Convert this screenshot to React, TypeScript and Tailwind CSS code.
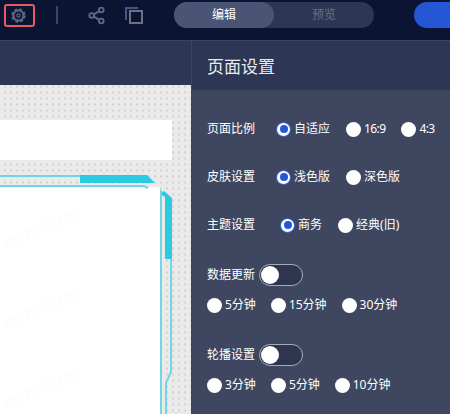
import { Share2 } from "lucide-react"

const font = { fontFamily: '"Noto Sans", "Noto Sans CJK SC", sans-serif' }

function Radio({ label, checked, tight }: { label: string; checked?: boolean; tight?: boolean }) {
  return (
    <div className="flex shrink-0 items-center gap-[3px]">
      <span
        className={
          checked
            ? "flex h-[15px] w-[15px] items-center justify-center rounded-full border border-[#2456d6] bg-white"
            : "h-[15px] w-[15px] rounded-full bg-white"
        }
      >
        {checked && <span className="h-2 w-2 rounded-full bg-[#2456d6]" />}
      </span>
      <span className={tight ? "text-[12px] leading-none tracking-[-0.6px] whitespace-nowrap text-white" : "text-[12px] leading-none whitespace-nowrap text-white"}>
        {label}
      </span>
    </div>
  )
}

function Toggle() {
  return (
    <div className="flex h-[22px] w-[44px] items-center rounded-full border border-[#a8abb5] bg-[#2f3550] pl-[1px]">
      <span className="h-[18px] w-[18px] rounded-full bg-white" />
    </div>
  )
}

function Row({ className, children }: { className: string; children: React.ReactNode }) {
  return <div className={`flex h-6 items-center ${className}`}>{children}</div>
}

function Label({ text }: { text: string }) {
  return <span className="shrink-0 text-[12px] leading-none whitespace-nowrap text-white">{text}</span>
}

export default function App() {
  return (
    <div className="flex h-[414px] w-[450px] flex-col overflow-hidden bg-[#0b1533]" style={font}>
      {/* Top bar */}
      <div className="flex h-10 shrink-0 items-center pb-[10px]">
        <div className="ml-1 flex h-[23px] w-[31px] items-center justify-center rounded-[3px] border-2 border-[#e8585c] pr-[3px]">
          <svg width="15" height="15" viewBox="0 0 15 15" fill="none">
            <circle cx="7.5" cy="7.5" r="5" stroke="#5d6884" strokeWidth="2.2" />
            <circle cx="7.5" cy="7.5" r="6.4" stroke="#5d6884" strokeWidth="1.6" strokeDasharray="3 2.03" />
            <circle cx="7.5" cy="7.5" r="1.6" stroke="#5d6884" strokeWidth="1.2" />
          </svg>
        </div>
        <div className="ml-[21px] h-[18px] w-[2px] bg-[#3d4560]" />
        <Share2 className="ml-[29px] h-[19px] w-[19px] text-[#5d6884]" strokeWidth={2.4} />
        <svg className="ml-[19px]" width="18" height="17" viewBox="0 0 18 17" fill="none">
          <path d="M1 13V1h12" stroke="#46558a" strokeWidth="2" />
          <rect x="5" y="4" width="12" height="12" stroke="#6c7184" strokeWidth="2" />
        </svg>
        <div className="ml-[31px] flex h-[26px] w-[200px] items-center rounded-full bg-[#2d3654] text-[12px]">
          <div className="flex h-full w-[100px] items-center justify-center rounded-full bg-[#4a5475] text-white">编辑</div>
          <div className="flex h-full w-[100px] items-center justify-center text-[#6a7085]">预览</div>
        </div>
        <div className="ml-10 h-[26px] flex-1 rounded-l-full bg-[#2456d6]" />
      </div>

      <div className="flex min-h-0 flex-1">
        {/* Canvas column */}
        <div className="flex w-[192px] shrink-0 flex-col border-r border-[#3d4560]">
          <div className="h-[45px] shrink-0 border-t border-[#3d4560] bg-[#2d3654]" />
          <div className="relative flex min-h-0 flex-1 flex-col bg-[#eaeaea] bg-[radial-gradient(#d2d2d2_1px,transparent_1.2px)] bg-[length:6px_6px] bg-[position:2px_-1.5px]">
            <div className="mt-[35px] h-10 w-[172px] shrink-0 bg-white" />
            <div className="relative mt-[27px] w-[160px] flex-1 overflow-hidden bg-white">
              <span className="absolute left-[2px] top-[32px] -rotate-[24deg] text-[13px] text-[#fbfbfb]">l2100152210</span>
              <span className="absolute left-[2px] top-[112px] -rotate-[24deg] text-[13px] text-[#fbfbfb]">l2100152210</span>
              <span className="absolute left-[2px] top-[192px] -rotate-[24deg] text-[13px] text-[#fbfbfb]">l2100152210</span>
            </div>
            {/* Cyan frame around the card */}
            <svg className="absolute left-0 top-0" width="191" height="329" viewBox="0 85 191 329" fill="none">
              <path d="M0 176H80" stroke="#6fd7e6" strokeWidth="2" />
              <path d="M80 175H147L155 183H80Z" fill="#2bc9e2" />
              <path d="M160 194L164 191L172 198V259H165V197Z" fill="#2bc9e2" />
              <path d="M0 186H144L148 188" stroke="#6fd7e6" strokeWidth="2" />
              <path d="M161 190V414" stroke="#6fd7e6" strokeWidth="2" />
              <path d="M171 259V372L166 383V414" stroke="#6fd7e6" strokeWidth="2" />
            </svg>
          </div>
        </div>

        {/* Settings panel */}
        <div className="flex min-w-0 flex-1 flex-col">
          <div className="flex h-[50px] shrink-0 items-center border-t border-[#3d4560] bg-[#2d3654] px-[15px] pt-[2px] text-[17px] text-[#e8eaf0]">
            页面设置
          </div>
          <div className="flex-1 bg-[#3e475f] px-[15px]">
            <Row className="mt-[27px] gap-[21px]">
              <Label text="页面比例" />
              <div className="flex gap-4">
                <Radio label="自适应" checked />
                <Radio label="16:9" tight />
                <Radio label="4:3" tight />
              </div>
            </Row>
            <Row className="mt-6 gap-[21px]">
              <Label text="皮肤设置" />
              <div className="flex gap-4">
                <Radio label="浅色版" checked />
                <Radio label="深色版" />
              </div>
            </Row>
            <Row className="mt-6 gap-[25px]">
              <Label text="主题设置" />
              <div className="flex gap-4">
                <Radio label="商务" checked />
                <Radio label="经典(旧)" />
              </div>
            </Row>
            <Row className="mt-[26px] gap-1">
              <Label text="数据更新" />
              <Toggle />
            </Row>
            <Row className="mt-[6px] gap-[15px]">
              <Radio label="5分钟" />
              <Radio label="15分钟" />
              <Radio label="30分钟" />
            </Row>
            <Row className="mt-[26px] gap-1">
              <Label text="轮播设置" />
              <Toggle />
            </Row>
            <Row className="mt-[6px] gap-[15px]">
              <Radio label="3分钟" />
              <Radio label="5分钟" />
              <Radio label="10分钟" />
            </Row>
          </div>
        </div>
      </div>
    </div>
  )
}
